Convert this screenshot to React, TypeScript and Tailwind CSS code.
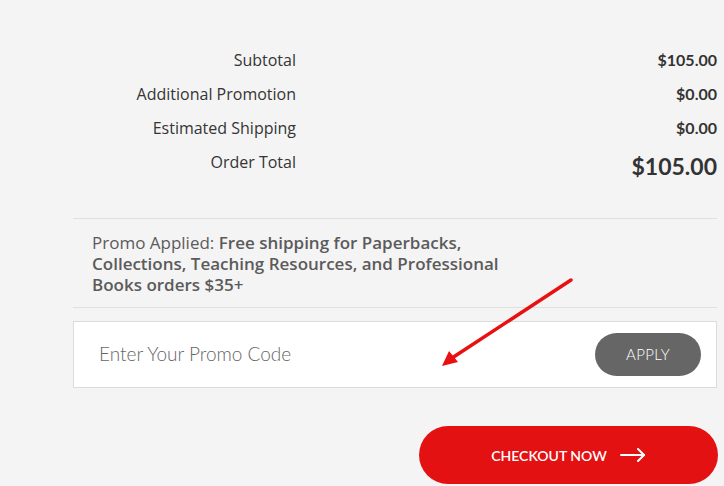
import React from "react";

export default function App() {
  const label = "w-[296px] text-right text-[16px] text-[#353535]";
  return (
    <div className="relative w-[724px] h-[486px] overflow-hidden bg-[#f4f4f4] text-[#333]" style={{ fontFamily: "Lato, 'Open Sans', sans-serif" }}>
      <div className="pt-[47px] pr-[7px]">
        <div className="flex items-center h-[26px]">
          <div className={label} style={{ fontFamily: "'Open Sans', sans-serif" }}>Subtotal</div>
          <div className="flex-1 text-right text-[16px] font-bold text-[#333]">$105.00</div>
        </div>
        <div className="flex items-center h-[26px] mt-[8px]">
          <div className={label} style={{ fontFamily: "'Open Sans', sans-serif" }}>Additional Promotion</div>
          <div className="flex-1 text-right text-[16px] font-bold text-[#333]">$0.00</div>
        </div>
        <div className="flex items-center h-[26px] mt-[8px]">
          <div className={label} style={{ fontFamily: "'Open Sans', sans-serif" }}>Estimated Shipping</div>
          <div className="flex-1 text-right text-[16px] font-bold text-[#333]">$0.00</div>
        </div>
        <div className="flex items-start h-[34px] mt-[7px]">
          <div className={label + " pt-[2px]"} style={{ fontFamily: "'Open Sans', sans-serif" }}>Order Total</div>
          <div className="flex-1 text-right text-[23px] font-bold text-[#333] leading-[30px] pt-[3px]">$105.00</div>
        </div>
      </div>

      <div className="ml-[73px] mr-[7px] mt-[36px] border-t border-[#e0e0e0]">
        <div className="pl-[19px] pt-[13px] pb-[12px] w-[450px] text-[17px] leading-[21px] text-[#5b5b5b]" style={{ fontFamily: "'Open Sans', sans-serif" }}>
          Promo Applied: <span className="font-semibold">Free shipping for Paperbacks, Collections, Teaching Resources, and Professional Books orders $35+</span>
        </div>
        <div className="border-t border-[#e0e0e0]" />
        <div className="mt-[13px] h-[67px] bg-white border border-[#dcdcdc] flex items-center pl-[25px] pr-[15px]">
          <div className="flex-1 text-[19px] font-light text-[#666]">Enter Your Promo Code</div>
          <button className="w-[106px] h-[43px] rounded-full bg-[#666] text-white text-[15px] font-light tracking-[0.3px]">APPLY</button>
        </div>
        <div className="flex justify-end mt-[38px]">
          <button className="w-[299px] h-[58px] -mr-[1px] rounded-full bg-[#e31112] text-white text-[14px] font-semibold flex items-center justify-center gap-[13px]">
            <span>CHECKOUT NOW</span>
            <svg width="26" height="14" viewBox="0 0 26 14" fill="none" stroke="white" strokeWidth="2" strokeLinecap="round" strokeLinejoin="round">
              <path d="M1 7H24" />
              <path d="M18 1L24 7L18 13" />
            </svg>
          </button>
        </div>
      </div>

      <svg className="absolute left-0 top-0 pointer-events-none" width="724" height="486">
        <line x1="571" y1="280" x2="452" y2="358" stroke="#e81010" strokeWidth="3.5" strokeLinecap="round" />
        <polygon points="442,366 449,351 458,362" fill="#e81010" />
      </svg>
    </div>
  );
}
